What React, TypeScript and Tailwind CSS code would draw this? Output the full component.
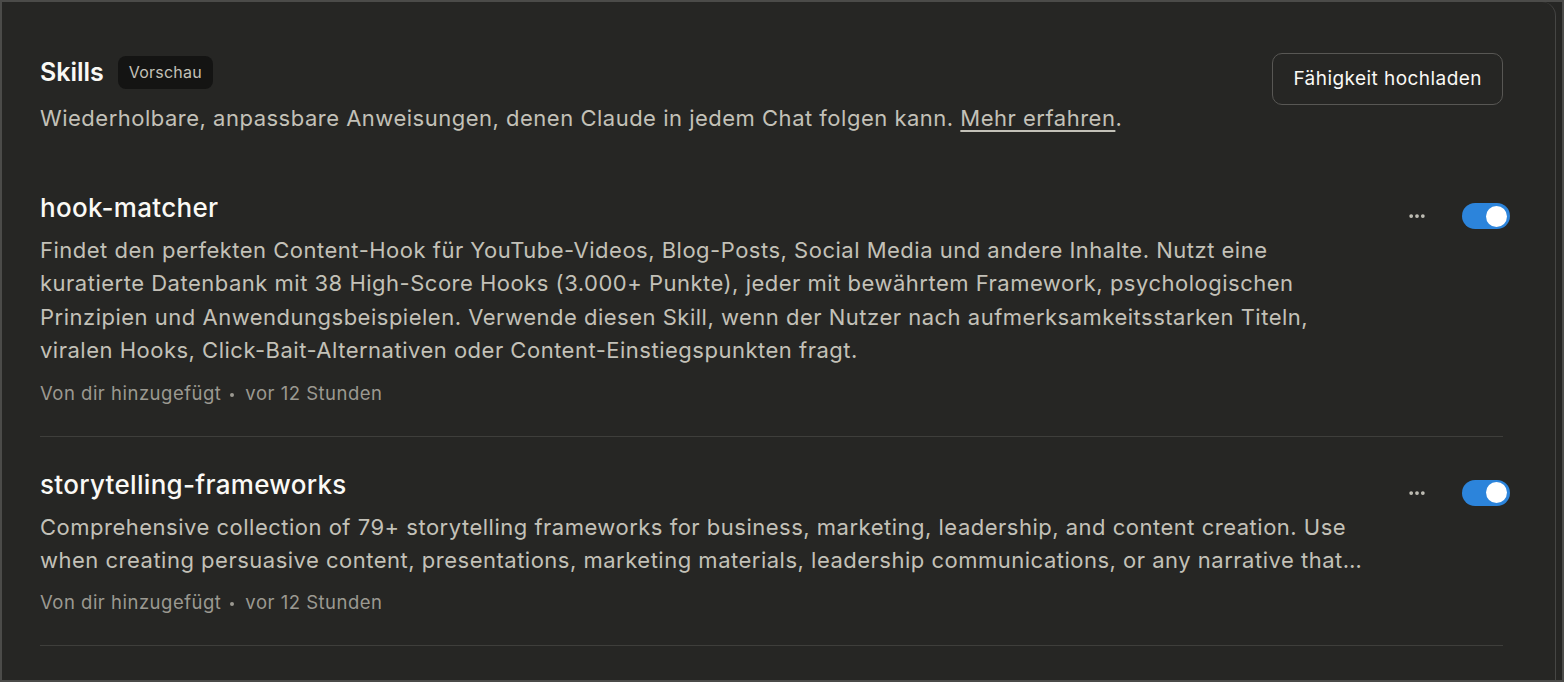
import { MoreHorizontal } from 'lucide-react'

interface Skill {
  name: string
  description: string
  clamp?: boolean
}

const skills: Skill[] = [
  {
    name: 'hook-matcher',
    description:
      'Findet den perfekten Content-Hook für YouTube-Videos, Blog-Posts, Social Media und andere Inhalte. Nutzt eine kuratierte Datenbank mit 38 High-Score Hooks (3.000+ Punkte), jeder mit bewährtem Framework, psychologischen Prinzipien und Anwendungsbeispielen. Verwende diesen Skill, wenn der Nutzer nach aufmerksamkeitsstarken Titeln, viralen Hooks, Click-Bait-Alternativen oder Content-Einstiegspunkten fragt.',
  },
  {
    name: 'storytelling-frameworks',
    description:
      'Comprehensive collection of 79+ storytelling frameworks for business, marketing, leadership, and content creation. Use when creating persuasive content, presentations, marketing materials, leadership communications, or any narrative that needs structure and emotional impact.',
    clamp: true,
  },
]

function Toggle() {
  return (
    <div className="w-[48px] h-[26px] rounded-full bg-[#2c84db] flex items-center justify-end px-[3px]">
      <div className="w-[21px] h-[21px] rounded-full bg-white" />
    </div>
  )
}

function SkillRow({ skill }: { skill: Skill }) {
  return (
    <div className="flex items-start pt-[31px] pb-[30px] border-b border-[#3e3e3b]">
      <div className="flex-1 min-w-0 max-w-[1325px]">
        <h3 className="text-[26px] leading-[34px] font-medium tracking-[0.3px] text-[#faf9f5]">
          {skill.name}
        </h3>
        <p
          className={`mt-[9px] text-[22px] leading-[33.4px] tracking-[0.5px] text-[#c3c1b8] ${skill.clamp ? 'line-clamp-2' : ''}`}
        >
          {skill.description}
        </p>
        <div className="mt-[12px] flex items-center gap-[9px] text-[18.5px] leading-[26px] tracking-[0.5px] text-[#9b9991]">
          <span>Von dir hinzugefügt</span>
          <span className="w-[4px] h-[4px] rounded-full bg-[#9b9991] mt-[4px] mr-[2px]" />
          <span>vor 12 Stunden</span>
        </div>
      </div>
      <div className="ml-auto flex items-center gap-[35px] pt-[12px] -mr-[7px]">
        <MoreHorizontal className="w-5 h-5 text-[#c3c1b8]" strokeWidth={2.5} />
        <Toggle />
      </div>
    </div>
  )
}

export default function App() {
  return (
    <div
      className="w-[1564px] h-[682px] bg-[#4b4b49] p-[2px] overflow-hidden"
      style={{ fontFamily: 'Inter, "Noto Sans", sans-serif' }}
    >
      <div className="h-full bg-[#262624] pr-[6px]">
        <div className="h-full border-r border-[#464644] rounded-tr-[14px] pl-[38px] pr-[52px] pt-[52px]">
          {/* Header */}
          <div className="flex items-start justify-between">
            <div>
              <div className="flex items-center gap-[14px]">
                <h1 className="text-[25px] leading-[36px] font-semibold text-[#faf9f5]">Skills</h1>
                <span className="px-[11px] h-[33px] flex items-center rounded-[8px] bg-[#141413] text-[16px] tracking-[0.2px] text-[#c3c1b8]">
                  Vorschau
                </span>
              </div>
              <p className="mt-[14px] text-[22px] leading-[28px] tracking-[0.5px] text-[#c3c1b8]">
                Wiederholbare, anpassbare Anweisungen, denen Claude in jedem Chat folgen kann.{' '}
                <a href="#" className="underline underline-offset-[4px] decoration-[1.5px]">
                  Mehr erfahren
                </a>
                .
              </p>
            </div>
            <button className="mt-[-1px] h-[52px] px-[20px] rounded-[10px] border border-[#585754] text-[19px] tracking-[0.45px] text-[#faf9f5]">
              Fähigkeit hochladen
            </button>
          </div>

          {/* Skills list */}
          <div className="mt-[28px]">
            {skills.map((s) => (
              <SkillRow key={s.name} skill={s} />
            ))}
          </div>
        </div>
      </div>
    </div>
  )
}
